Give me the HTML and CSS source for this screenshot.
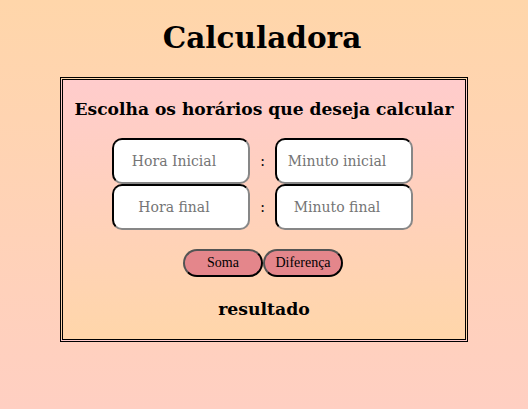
FILE: index.html
```html
<!DOCTYPE html>
<html lang="pt">
<head>
<meta charset="utf-8">
<title>Calculadora</title>
<link rel="stylesheet" href="styles.css">
</head>
<body>
<h1 class="title">Calculadora</h1>
<div class="box">
  <h2 class="subtitle">Escolha os horários que deseja calcular</h2>
  <div class="rows">
    <div class="row">
      <input class="field" type="text" placeholder="Hora Inicial">
      <span class="colon">:</span>
      <input class="field" type="text" placeholder="Minuto inicial">
    </div>
    <div class="row">
      <input class="field" type="text" placeholder="Hora final">
      <span class="colon">:</span>
      <input class="field" type="text" placeholder="Minuto final">
    </div>
  </div>
  <div class="buttons">
    <button class="btn" type="button">Soma</button>
    <button class="btn" type="button">Diferença</button>
  </div>
  <p class="result">resultado</p>
</div>
</body>
</html>
```

FILE: styles.css
```css
html, body {
  margin: 0;
  padding: 0;
}
body {
  min-height: 100vh;
  background: linear-gradient(to bottom, #ffd6aa 0%, #ffcfc2 100%);
  font-family: "DejaVu Serif", "Liberation Serif", serif;
  color: #000;
}
.title {
  margin: 0;
  padding: 19px 4px 21px 0;
  text-align: center;
  font-size: 29.5px;
  line-height: 37px;
  font-weight: bold;
}
.box {
  box-sizing: border-box;
  width: 408px;
  margin: 0 auto;
  border: 3px double #000;
  background: linear-gradient(to bottom, #ffcccc 0%, #ffd6aa 100%);
  text-align: center;
  padding: 17px 0 19px;
}
.subtitle {
  margin: 0 0 17px;
  font-size: 17.1px;
  line-height: 24px;
  font-weight: bold;
  white-space: nowrap;
}
.rows {
  display: flex;
  flex-direction: column;
  align-items: center;
}
.row {
  display: flex;
  align-items: center;
  margin-left: -3px;
}
.colon {
  width: 25px;
  font-size: 14px;
  text-align: center;
}
.field {
  box-sizing: border-box;
  width: 138px;
  height: 46px;
  border: 2px inset #333;
  border-radius: 10px;
  background: #fff;
  font-family: inherit;
  font-size: 14px;
  text-align: center;
  padding: 0 16px 0 2px;
}
.field::placeholder {
  color: #757575;
}
.buttons {
  display: flex;
  justify-content: center;
  margin: 19px 0 0 -2px;
}
.btn {
  box-sizing: border-box;
  width: 80px;
  height: 28px;
  border: 2px outset #000;
  border-radius: 14px;
  background: #e4868b;
  font-family: "Liberation Serif", serif;
  font-size: 14px;
  color: #000;
  padding: 0;
}
.result {
  margin: 21px 0 0;
  font-size: 17.3px;
  line-height: 22px;
  font-weight: bold;
}
```
